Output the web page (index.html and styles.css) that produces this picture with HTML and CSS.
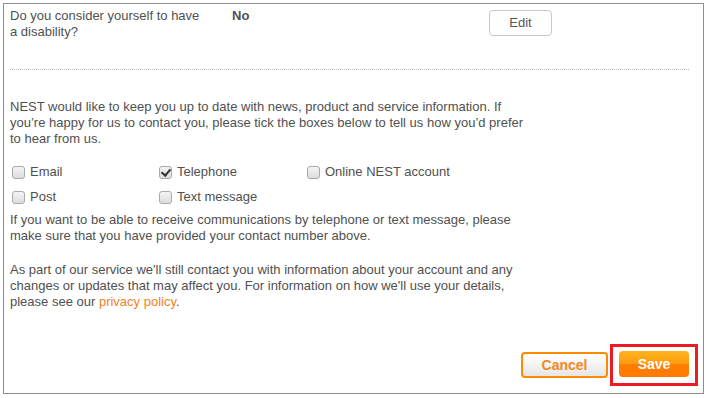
FILE: index.html
```html
<html>

<head>
  <meta charset="utf8">
  <title>Contact preferences</title>
  <link rel="stylesheet" href="styles.css">
</head>

<body>
  <section class="panel">
    <div class="q-row">
      <div class="q-label">Do you consider yourself to have<br>a disability?</div>
      <div class="q-value">No</div>
      <button class="edit">Edit</button>
    </div>
    <hr class="divider">
    <p class="intro">
      NEST would like to keep you up to date with news, product and service information. If<br>
      you’re happy for us to contact you, please tick the boxes below to tell us how you’d prefer<br>
      to hear from us.
    </p>
    <div class="options">
      <label class="opt"><span class="box"></span>Email</label>
      <label class="opt"><span class="box checked"></span>Telephone</label>
      <label class="opt"><span class="box"></span>Online NEST account</label>
      <label class="opt"><span class="box"></span>Post</label>
      <label class="opt"><span class="box"></span>Text message</label>
    </div>
    <p class="note">
      If you want to be able to receive communications by telephone or text message, please<br>
      make sure that you have provided your contact number above.
    </p>
    <p class="note">
      As part of our service we'll still contact you with information about your account and any<br>
      changes or updates that may affect you. For information on how we'll use your details,<br>
      please see our <a href="#">privacy policy</a>.
    </p>
    <div class="actions">
      <button class="cancel">Cancel</button>
      <span class="highlight"><button class="save">Save</button></span>
    </div>
  </section>
</body>

</html>
```

FILE: styles.css
```css
body {
  margin: 0;
  padding: 3px;
  font: 13px/16px "Liberation Sans", sans-serif;
  color: #505050;
  background: #fff;
}

.panel {
  box-sizing: border-box;
  width: 701px;
  height: 391px;
  border: 1px solid #8e8e8e;
  padding: 4px 5px 0 6px;
  display: flex;
  flex-direction: column;
}

.q-row {
  display: grid;
  grid-template-columns: 222px 257px 63px;
  align-items: start;
}

.q-label {
  white-space: nowrap;
}

.q-value {
  font-weight: bold;
}

.edit {
  margin-top: 2px;
  height: 26px;
  background: #fff;
  border: 1px solid #c8c8c8;
  border-radius: 4px;
  font: inherit;
  color: #555;
}

.divider {
  margin: 29px 9px 0 0;
  border: 0;
  border-top: 1px dotted #b8b8b8;
}

p {
  margin: 0;
  white-space: nowrap;
}

.intro {
  margin-top: 29px;
}

.options {
  margin-top: 17px;
  display: grid;
  grid-template-columns: 147px 148px 200px;
  row-gap: 9px;
}

.opt {
  display: flex;
  align-items: center;
  height: 16px;
  white-space: nowrap;
}

.box {
  box-sizing: border-box;
  width: 13px;
  height: 13px;
  margin: 0 5px 0 2px;
  border: 1px solid #a9a9a9;
  border-radius: 3px;
  background: linear-gradient(#f4f4f4, #dcdcdc);
  position: relative;
}

.box.checked::after {
  content: "";
  position: absolute;
  left: 3px;
  top: 0;
  width: 4px;
  height: 7px;
  border: solid #333;
  border-width: 0 2px 2px 0;
  transform: rotate(40deg);
}

.note {
  margin-top: 7px;
}

.note + .note {
  margin-top: 18px;
}

a {
  color: #f7801e;
  text-decoration: none;
}

.actions {
  margin-top: auto;
  margin-bottom: 7px;
  display: flex;
  justify-content: flex-end;
  align-items: center;
}

.cancel,
.save {
  height: 26px;
  border-radius: 4px;
  font: bold 14px "Liberation Sans", sans-serif;
}

.cancel {
  width: 87px;
  margin-right: 2px;
  border: 2px solid #ff8a00;
  background: linear-gradient(#ffffff, #e6e6e6);
  color: #f7881e;
}

.highlight {
  display: flex;
  padding: 4px 6px 6px 6px;
  border: 3px solid #ec1c24;
}

.save {
  width: 70px;
  border: 0;
  color: #fff;
  background: linear-gradient(#fdb51f 0%, #fd9a10 50%, #ff7d00 51%, #ff7b00 100%);
}
```
